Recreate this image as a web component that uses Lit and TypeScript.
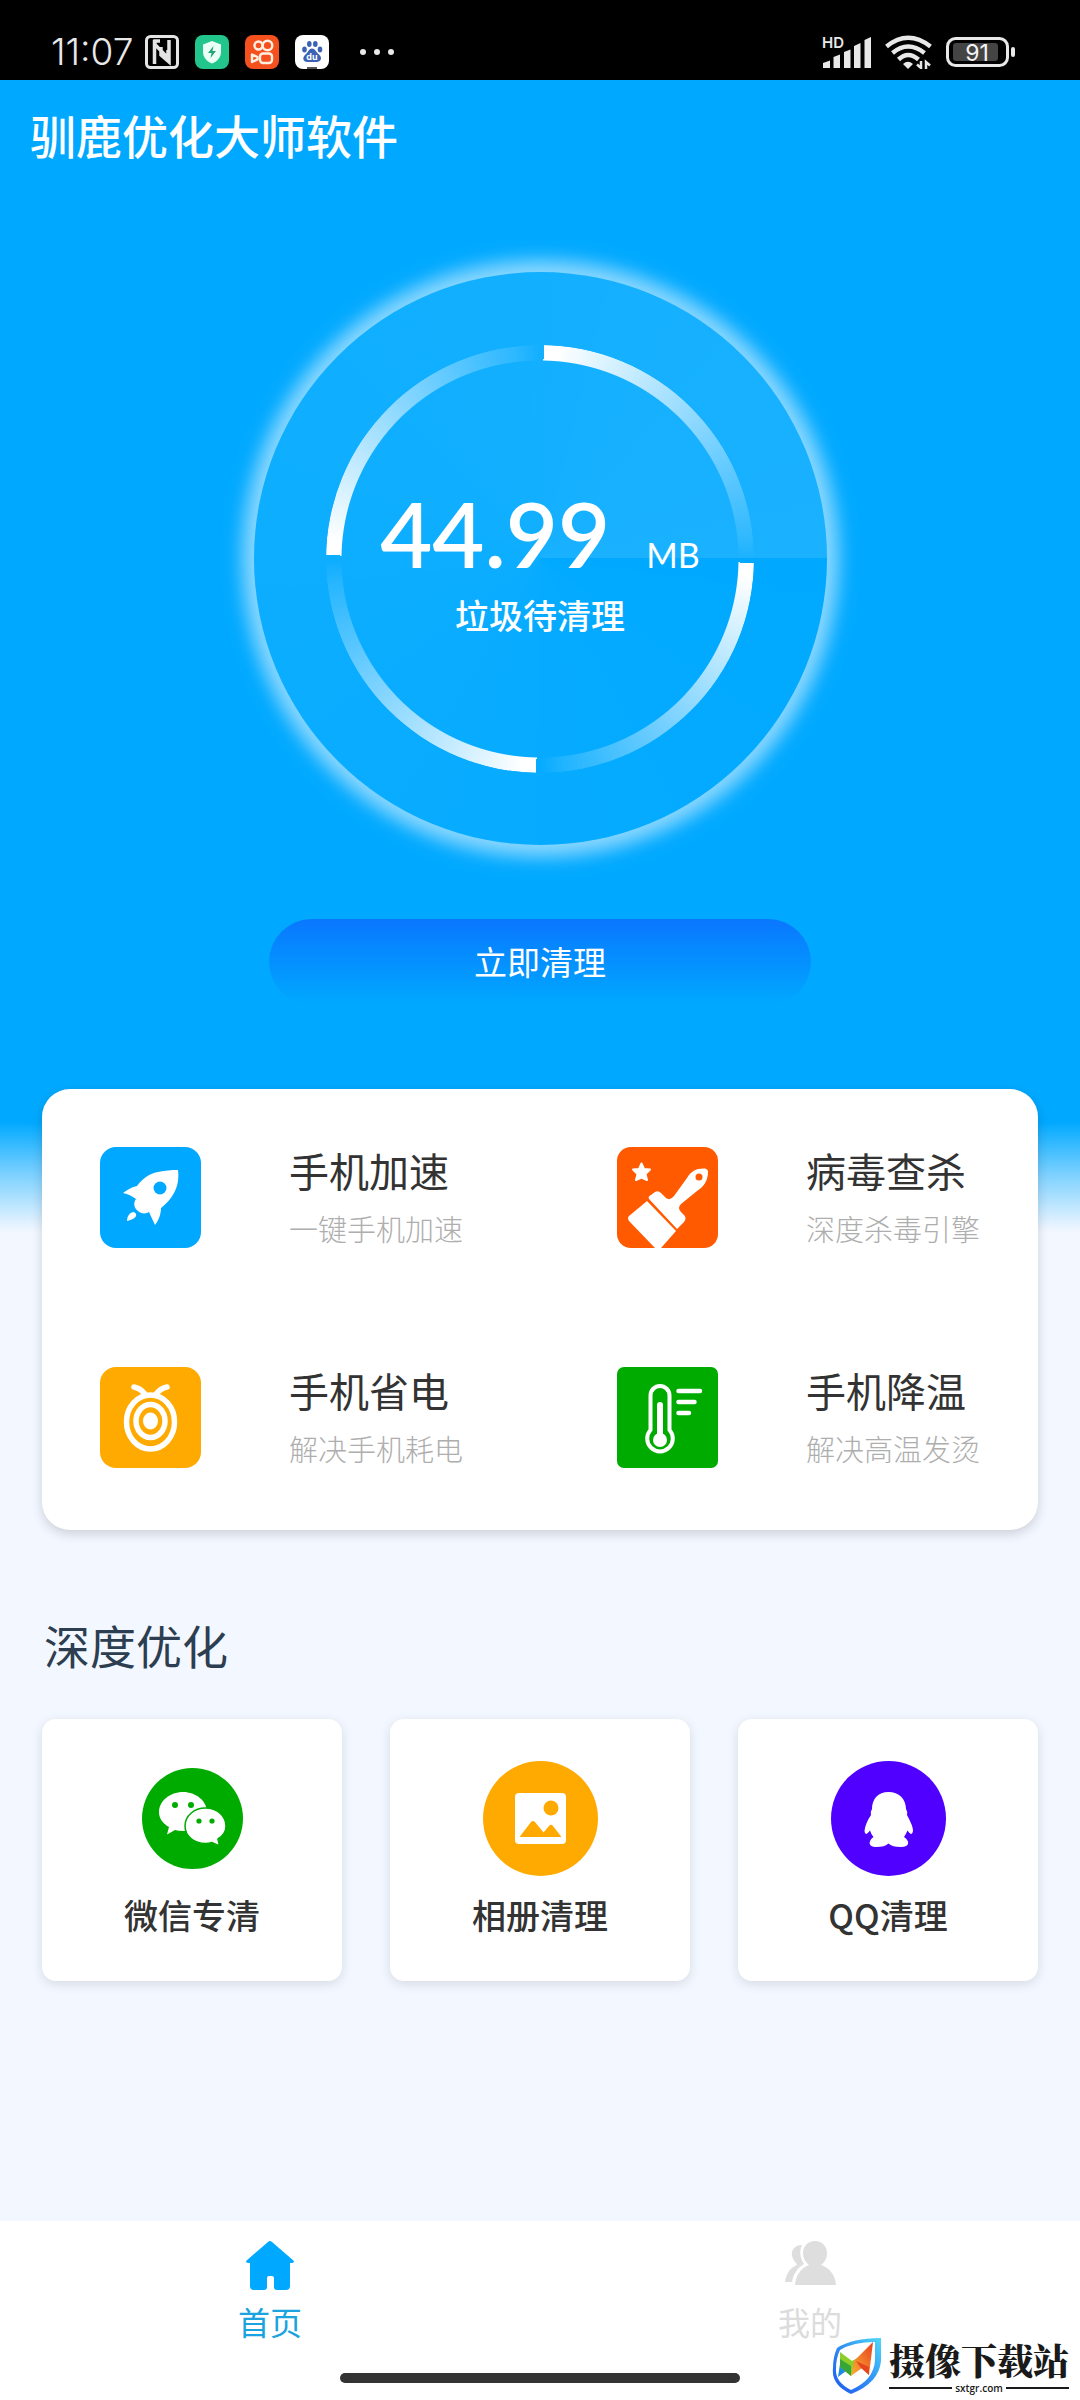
import { LitElement, html, css, svg } from "lit";
import { customElement, property } from "lit/decorators.js";

const rocket = svg`
  <rect width="101" height="101" rx="16" fill="#00a9ff"/>
  <path fill="#fff" d="M78 23C64 23 53 25 46 30C42 33 39 36 37 39C32 40 27 43 23 46C28 47 32 49 36 52C33 56 34 61 38 64C41 67 46 67 49 65C51 69 53 74 55 78C58 74 61 68 61 61C66 57 71 52 74 46C78 39 79 31 78 23Z"/>
  <circle cx="60" cy="41" r="6.500" fill="#00a9ff"/>
  <path fill="#fff" d="M27 74C27 69 30 65 34 65C38 67 37 72 27 74Z"/>`;

const bee = svg`
  <rect width="101" height="101" rx="16" fill="#fa0"/>
  <g fill="none" stroke="#fff" stroke-width="5.500" stroke-linecap="round">
    <ellipse cx="50.500" cy="55" rx="24" ry="27"/>
    <ellipse cx="50.500" cy="54" rx="14.500" ry="16.500"/>
    <path d="M34 20Q40 21 45 27M67 20Q61 21 56 27"/>
  </g>
  <ellipse cx="50.500" cy="54" rx="7.500" ry="8.500" fill="#fff"/>`;

const brush = svg`
  <rect width="101" height="101" rx="14" fill="#ff5a00"/>
  <path fill="#fff" stroke="#fff" stroke-width="2" stroke-linejoin="round" d="M24.500 16.500L27 22L33 22.500L28.500 27L30 33L24.500 30.500L19 33L20.500 27L16 22.500L22 22Z"/>
  <path fill="#fff" d="M32 52C31 50 32 49 34 48L38 45Q41 43 44 46L49 51Q53 54 57 49L70 31C74 24 80 21 88 21.500Q91 22 91 25C91 33 87 40 80 44L64 57Q60 61 64 65L67 68Q70 71 67 75L60 82Z"/>
  <circle cx="82" cy="30" r="3.500" fill="#ff5a00"/>
  <path fill="#fff" d="M30 54L12 69Q10 71 12 74L38 101H44L59 84Z"/>`;

const thermometer = svg`
  <rect width="101" height="101" rx="7" fill="#00ab00"/>
  <path fill="none" stroke="#fff" stroke-width="4" d="M33.500 63V28.500a9.500 9.500 0 0 1 19 0V63a12.800 12.800 0 1 1 -19 0Z"/>
  <path stroke="#fff" stroke-width="6" stroke-linecap="round" d="M43 38V72"/>
  <circle cx="43" cy="73" r="7" fill="#fff"/>
  <path stroke="#fff" stroke-width="4.500" stroke-linecap="round" d="M61.500 24H83M61.500 35H77.500M61.500 46H72"/>`;

const wechat = svg`
  <circle cx="50.500" cy="50.500" r="50.500" fill="#00ab00"/>
  <path fill="#fff" d="M41 24C54 24 65 33 65 44C65 55 54 63 42 63Q36 63 33 62L25 66.500L27 59C20 55 17 50 17 44C17 33 28 24 41 24Z"/>
  <circle cx="33" cy="37" r="3" fill="#00ab00"/><circle cx="49" cy="37" r="3" fill="#00ab00"/>
  <path fill="#fff" stroke="#00ab00" stroke-width="1.500" d="M63.500 40C75 40 84 48 84 58Q84 66 76 71L77.500 78L70 74.500Q67 75.500 63.500 75.500C52 75.500 43 68 43 58C43 48 52 40 63.500 40Z"/>
  <circle cx="57" cy="53" r="2.600" fill="#00ab00"/><circle cx="70" cy="53" r="2.600" fill="#00ab00"/>`;

const album = svg`
  <circle cx="57.500" cy="57.500" r="57.500" fill="#fa0"/>
  <rect x="32" y="32" width="51" height="51" rx="4" fill="#fff"/>
  <circle cx="68" cy="47" r="7.500" fill="#fa0"/>
  <path fill="#fa0" d="M36.500 76L48 61Q50 59 52 61L60.500 71.500L66 65Q68 62.500 70 65L78.500 76Z"/>`;

const qq = svg`
  <circle cx="57.500" cy="57.500" r="57.500" fill="#5000ff"/>
  <path fill="#fff" d="M57.500 31C47 31 41 38 41 48Q39 51 40 54C36 60 34 65 33.500 70Q34 76 39 69.500Q40 73 42.500 76C37 80 37 86 45 86Q54 86 57.500 82.500Q61 86 70 86C79 86 79 80 73 76Q75 73 76.500 69.500Q81 76 82 70C82 65 79 60 76 54Q77 51 75 48C75 38 68 31 57.500 31Z"/>`;

@customElement("feature-tile")
export class FeatureTile extends LitElement {
  @property() heading = "";
  @property() note = "";
  @property({ attribute: false }) icon: unknown = null;

  static styles = css`
    :host { display: block; }
    .tile {
      display: flex;
      align-items: flex-start;
      gap: 88px;
      padding: 0;
      border: 0;
      background: none;
      font: inherit;
      text-align: left;
      cursor: pointer;
    }
    .icon { display: block; width: 101px; height: 101px; flex: none; }
    .texts { display: flex; flex-direction: column; gap: 15px; }
    .heading { font-size: 40px; line-height: 46px; color: #333; }
    .note { font-size: 29px; line-height: 40px; color: #aeaeae; font-weight: 300; }
  `;

  render() {
    return html`
      <button class="tile" type="button">
        <svg class="icon" viewBox="0 0 101 101" aria-hidden="true">${this.icon}</svg>
        <span class="texts">
          <span class="heading">${this.heading}</span>
          <span class="note">${this.note}</span>
        </span>
      </button>`;
  }
}

@customElement("status-bar")
export class StatusBar extends LitElement {
  static styles = css`
    :host { display: block; background: #000; color: #e8e8e8; }
    .bar {
      display: flex;
      justify-content: space-between;
      align-items: center;
      height: 56px;
      padding: 24px 64px 0 51px;
      font-family: Inter, "Noto Sans CJK SC", sans-serif;
    }
    .side { display: flex; align-items: center; }
    .time { font-size: 37px; line-height: 40px; font-weight: 300; margin-right: 12px; }
    .apps { display: flex; align-items: center; gap: 16px; }
    .app { display: block; width: 34px; height: 34px; }
    .more { display: block; width: 36px; height: 8px; margin-left: 30px; }
    .signals { display: flex; align-items: center; gap: 14px; }
    .cell { display: block; width: 50px; height: 42px; }
    .wifi { display: block; width: 47px; height: 34px; }
    .battery { display: block; width: 70px; height: 30px; }
  `;

  render() {
    return html`
      <div class="bar">
        <div class="side">
          <span class="time">11:07</span>
          <div class="apps">
            <svg class="app" viewBox="0 0 34 34" aria-hidden="true">
              <rect x="1.500" y="1.500" width="31" height="31" rx="4" fill="none" stroke="#e4e4e4" stroke-width="3"/>
              <path fill="none" stroke="#e4e4e4" stroke-width="3.500" d="M9.500 29V9L23 23V15M10 8.500V6L15 6M24 5V27L16 20V12"/>
            </svg>
            <svg class="app" viewBox="0 0 34 34" aria-hidden="true">
              <rect width="34" height="34" rx="8" fill="#22c58b"/>
              <path fill="#eafff6" d="M17 6L26 9.500V17C26 22.500 22 26.500 17 28.500C12 26.500 8 22.500 8 17V9.500Z"/>
              <path fill="#22a577" d="M18.500 11L13 18H16.500L15.500 23L21 16H17.500Z"/>
            </svg>
            <svg class="app" viewBox="0 0 34 34" aria-hidden="true">
              <rect width="34" height="34" rx="8" fill="#f4511e"/>
              <g fill="none" stroke="#fff0e0" stroke-width="2.400">
                <circle cx="13.500" cy="10.500" r="4"/><circle cx="22.500" cy="10.500" r="4.800"/>
                <rect x="15" y="18.500" width="12" height="9.500" rx="3"/>
                <path stroke-linejoin="round" d="M7 19.500V27L12.500 24.500V22Z"/>
              </g>
            </svg>
            <svg class="app" viewBox="0 0 34 34" aria-hidden="true">
              <rect width="34" height="34" rx="8" fill="#fff"/>
              <g fill="#3b62b5">
                <ellipse cx="9.500" cy="14.500" rx="2.300" ry="3"/><ellipse cx="14.300" cy="9" rx="2.300" ry="3"/>
                <ellipse cx="20.300" cy="9" rx="2.300" ry="3"/><ellipse cx="25" cy="14.500" rx="2.300" ry="3"/>
                <path d="M17 13.500C20 13.500 21 17 24 19.500C28 23 25.500 27.500 21 27H13C8.500 27.500 6.500 23 10.500 19.500C13.500 17 14 13.500 17 13.500Z"/>
                <rect x="12" y="32" width="10" height="2" fill="#555"/>
              </g>
              <text x="17" y="25" text-anchor="middle" font-size="9" font-weight="700" fill="#fff">du</text>
            </svg>
          </div>
          <svg class="more" viewBox="0 0 36 8" aria-hidden="true" fill="#e8e8e8">
            <circle cx="4" cy="4" r="3"/><circle cx="18" cy="4" r="3"/><circle cx="32" cy="4" r="3"/>
          </svg>
        </div>
        <div class="signals">
          <svg class="cell" viewBox="0 -4 50 42" aria-hidden="true" fill="#e8e8e8">
            <text x="1" y="13" font-size="15" font-weight="600">HD</text>
            <path d="M2 33V28L9 25.500V33ZM12.500 33V22L19 19.500V33ZM23 33V17L29.500 14.500V33ZM33 33V11L39.500 8V33ZM43.500 33V5L50 2V33Z"/>
          </svg>
          <svg class="wifi" viewBox="0 0 47 34" aria-hidden="true">
            <g fill="none" stroke="#e8e8e8" stroke-width="4.500">
              <path d="M1.500 11.500Q23 -6 45.500 11.500M7.500 18Q23 5 39.500 18M13.500 24.500Q23 15.500 33.500 24.500"/>
            </g>
            <path fill="#e8e8e8" d="M18 29Q23 24.500 28 29L23 34Z"/>
            <path fill="none" stroke="#e8e8e8" stroke-width="2.500" d="M36 26V33L32 29.500M41 34V27L45 30.500"/>
          </svg>
          <svg class="battery" viewBox="0 0 70 30" aria-hidden="true">
            <rect x="1.500" y="1.500" width="60" height="27" rx="8" fill="none" stroke="#e8e8e8" stroke-width="3"/>
            <rect x="7" y="6" width="45" height="18" rx="3" fill="#444"/>
            <rect x="65" y="10" width="4" height="10" rx="2" fill="#e8e8e8"/>
            <text x="31" y="24" text-anchor="middle" font-size="23" fill="#f4f4f4">91</text>
          </svg>
        </div>
      </div>`;
  }
}

@customElement("app-root")
export class AppRoot extends LitElement {
  private features = [
    { heading: "手机加速", note: "一键手机加速", icon: rocket },
    { heading: "病毒查杀", note: "深度杀毒引擎", icon: brush },
    { heading: "手机省电", note: "解决手机耗电", icon: bee },
    { heading: "手机降温", note: "解决高温发烫", icon: thermometer },
  ];

  private cleaners = [
    { label: "微信专清", icon: wechat, size: 101 },
    { label: "相册清理", icon: album, size: 115 },
    { label: "QQ清理", icon: qq, size: 115 },
  ];

  static styles = css`
    :host {
      display: flex;
      flex-direction: column;
      position: relative;
      min-height: 100vh;
      background: #f3f7ff;
      font-family: "Noto Sans CJK SC", sans-serif;
    }
    .content {
      flex: 1;
      display: flex;
      flex-direction: column;
      padding: 20px 42px 48px;
      background: linear-gradient(#00a9ff 1042px, #80d2ff 1096px, #f3f7ff 1152px);
    }
    .title {
      margin: 0 0 0 -12px;
      font-size: 46px;
      line-height: 68px;
      font-weight: 500;
      color: #fff;
    }
    .gauge {
      align-self: center;
      display: grid;
      place-items: center;
      width: 573px;
      height: 573px;
      margin-top: 104px;
      border-radius: 50%;
      color: #fff;
      background: conic-gradient(from 90deg, rgba(255, 255, 255, 0), rgba(255, 255, 255, 0.1));
      box-shadow: 0 0 18px 12px rgba(255, 255, 255, 0.54);
    }
    .ring, .reading { grid-area: 1 / 1; }
    .ring {
      width: 428px;
      height: 428px;
      border-radius: 50%;
      background: repeating-conic-gradient(transparent 0 1deg, #fff 1deg 5deg, rgba(255, 255, 255, 0.1) 84deg, transparent 90deg);
      -webkit-mask: radial-gradient(circle, transparent 198px, #000 199px);
      mask: radial-gradient(circle, transparent 198px, #000 199px);
    }
    .reading {
      display: flex;
      flex-direction: column;
      align-items: center;
      padding-top: 2px;
    }
    .amount {
      display: flex;
      align-items: baseline;
      gap: 36px;
      font-family: Lato, "Noto Sans CJK SC", sans-serif;
      line-height: 88px;
    }
    .value { font-size: 90px; font-weight: 600; }
    .unit { font-size: 34px; }
    .caption { font-size: 34px; line-height: 32px; font-weight: 500; }
    .clean {
      align-self: center;
      width: 54.4%;
      height: 86px;
      margin-top: 74px;
      padding: 0 0 2px;
      border: 0;
      border-radius: 43px;
      background: linear-gradient(#0a76ff, #0689ff 35%, #00a9ff);
      color: #fff;
      font: inherit;
      font-size: 33px;
      cursor: pointer;
    }
    .features {
      display: grid;
      grid-template-columns: auto auto;
      justify-content: space-between;
      row-gap: 119px;
      margin-top: 84px;
      padding: 58px 58px 62px;
      border-radius: 28px;
      background: #fff;
      box-shadow: 0 4px 12px rgba(0, 0, 0, 0.16);
    }
    .section {
      margin: 82px 0 0 2px;
      font-size: 46px;
      line-height: 64px;
      font-weight: 400;
      color: #2c3e50;
    }
    .cleaners {
      display: grid;
      grid-template-columns: repeat(3, 1fr);
      gap: 48px;
      margin-top: 43px;
    }
    .card {
      display: flex;
      flex-direction: column;
      align-items: center;
      gap: 14px;
      padding: 42px 0 41px;
      border: 0;
      border-radius: 14px;
      background: #fff;
      box-shadow: 0 3px 12px rgba(0, 0, 0, 0.12);
      color: #333;
      font: inherit;
      font-size: 34px;
      font-weight: 500;
      line-height: 50px;
      cursor: pointer;
    }
    .badge { display: grid; place-items: center; height: 115px; }
    .badge svg { display: block; }
    .bottom { background: #fff; padding: 20px 0 17px; }
    .nav { display: grid; grid-template-columns: 1fr 1fr; }
    .tab {
      display: flex;
      flex-direction: column;
      align-items: center;
      gap: 7px;
      color: #dcdcdc;
      font-size: 32px;
      line-height: 48px;
      text-decoration: none;
    }
    .tab.current { color: #1ba3e0; }
    .tab svg { display: block; height: 49px; }
    .handle {
      width: 37%;
      height: 10px;
      margin: 28px auto 0;
      border-radius: 5px;
      background: #333;
    }
    .mark {
      position: absolute;
      right: 11px;
      bottom: 5px;
      display: flex;
      align-items: center;
      gap: 7px;
      color: #1a1a1a;
    }
    .shield { display: block; width: 50px; height: 58px; }
    .names { display: flex; flex-direction: column; width: 180px; }
    .name {
      font-family: "Noto Serif CJK SC", "Noto Sans CJK SC", serif;
      font-size: 36px;
      line-height: 44px;
      font-weight: 900;
      white-space: nowrap;
    }
    .site {
      display: flex;
      align-items: center;
      gap: 3px;
      font-family: "Open Sans", sans-serif;
      font-size: 10px;
      line-height: 12px;
      font-weight: 600;
    }
    .site::before, .site::after { content: ""; flex: 1; height: 2px; background: #1a1a1a; }
  `;

  render() {
    return html`
      <status-bar></status-bar>
      <main class="content">
        <h1 class="title">驯鹿优化大师软件</h1>
        <div class="gauge">
          <div class="ring"></div>
          <div class="reading">
            <div class="amount"><span class="value">44.99</span><span class="unit">MB</span></div>
            <div class="caption">垃圾待清理</div>
          </div>
        </div>
        <button class="clean" type="button">立即清理</button>
        <section class="features">
          ${this.features.map((f) => html`<feature-tile .heading=${f.heading} .note=${f.note} .icon=${f.icon}></feature-tile>`)}
        </section>
        <h2 class="section">深度优化</h2>
        <section class="cleaners">
          ${this.cleaners.map((c) => html`
            <button class="card" type="button">
              <span class="badge">
                <svg width=${c.size} height=${c.size} viewBox="0 0 ${c.size} ${c.size}" aria-hidden="true">${c.icon}</svg>
              </span>
              <span>${c.label}</span>
            </button>`)}
        </section>
      </main>
      <footer class="bottom">
        <nav class="nav">
          <a class="tab current" href="#home">
            <svg viewBox="0 0 48 49" aria-hidden="true" fill="#00a9ff">
              <path d="M22 1Q24 -1 26 1L48 20Q48 22 46 22H44V45Q44 49 40 49H31Q28 49 28 46V37Q28 35 26 35H23Q21 35 21 37V46Q21 49 18 49H8Q4 49 4 45V22H2Q0 22 0 20Z"/>
            </svg>
            <span>首页</span>
          </a>
          <a class="tab" href="#mine">
            <svg viewBox="0 0 51 49" aria-hidden="true" fill="#dedede">
              <path d="M30 0C37 0 42 5 42 12C42 17 40 21 36 24C45 27 50 34 51 44H10C11 34 16 27 24 24C20 21 18 17 18 12C18 5 23 0 30 0Z"/>
              <path d="M17 4C9 4 6 10 7 15Q8 19 11 22Q13 24 10 25C4 28 1 34 0 41H7C8 34 12 27 19 23C15 17 14 10 17 4Z"/>
            </svg>
            <span>我的</span>
          </a>
        </nav>
        <div class="handle"></div>
      </footer>
      <div class="mark">
        <svg class="shield" viewBox="0 0 50 58" aria-hidden="true">
          <defs>
            <linearGradient id="edge" x1="1" y1="0" x2="0" y2="1">
              <stop offset="0" stop-color="#4fd8f8"/><stop offset="0.500" stop-color="#2f8ff5"/><stop offset="1" stop-color="#1f55ee"/>
            </linearGradient>
            <linearGradient id="wing" x1="0" y1="1" x2="1" y2="0">
              <stop offset="0" stop-color="#f9b233"/><stop offset="1" stop-color="#e8401f"/>
            </linearGradient>
          </defs>
          <path fill="url(#edge)" d="M5 11Q20 1 49 1V24Q47 46 19 57Q-1 48 1 31Q1 20 5 11Z"/>
          <path fill="#fff" d="M8 13Q21 5 43 5V23Q42 43 19 53Q3 45 4 32Q4 21 8 13Z"/>
          <path fill="#1e88e5" d="M6 40L8 27L14 34Z"/>
          <path fill="#8ccf2a" d="M8 15L20 24L27 20L19 39L8 30Z"/>
          <path fill="#35a637" d="M8 22L19 29V39L8 30Z"/>
          <path fill="url(#wing)" d="M22 24L41 5L37 38L30 31L19 39Z"/>
          <path fill="#e5451f" d="M24 24L37 30V38L29 31Z"/>
        </svg>
        <div class="names">
          <span class="name">摄像下载站</span>
          <span class="site">sxtgr.com</span>
        </div>
      </div>`;
  }
}
